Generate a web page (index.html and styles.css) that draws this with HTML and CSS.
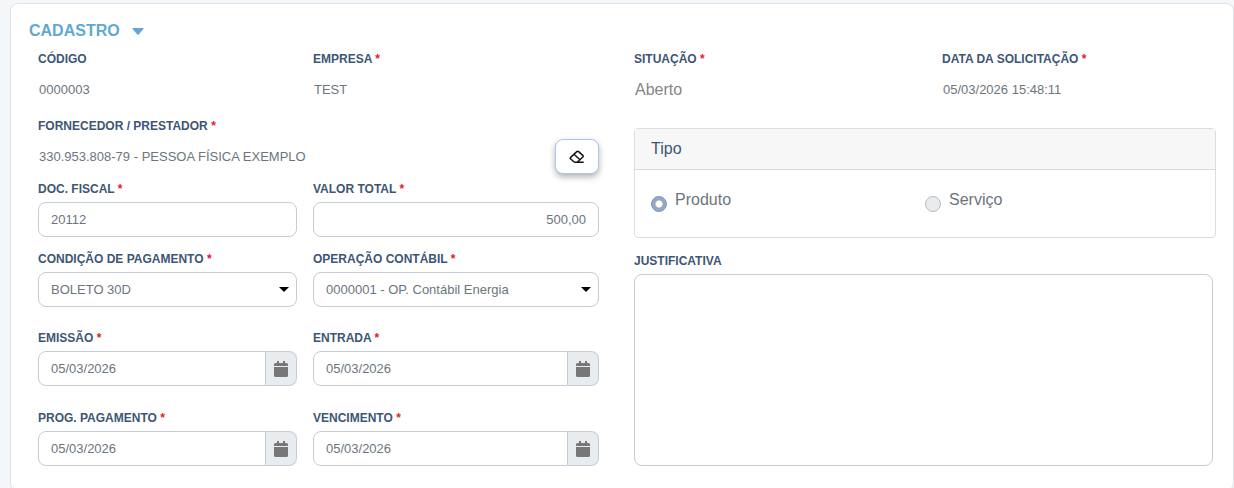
FILE: index.html
```html
<!DOCTYPE html>
<html lang="pt-BR">
<head>
	<meta charset="UTF-8">
	<title>Cadastro</title>
	<link rel="stylesheet" href="styles.css">
</head>
<body>
	<svg width="0" height="0" class="sprite">
		<symbol id="ico-cal" viewBox="0 0 14 16">
			<path d="M3 0h2v2h4V0h2v2h1.500a1.500 1.500 0 0 1 1.500 1.500V5H0V3.500A1.500 1.500 0 0 1 1.500 2H3zM0 6h14v8.500a1.500 1.500 0 0 1-1.500 1.500h-11A1.500 1.500 0 0 1 0 14.500z"/>
		</symbol>
	</svg>

	<form class="card">
		<h1 class="title">CADASTRO
			<svg width="12" height="7" viewBox="0 0 12 7"><path d="M1 0h10q1 0 .4 1L6.700 6.500q-.7.700-1.400 0L.6 1Q0 0 1 0z"/></svg>
		</h1>

		<div class="cols">
			<div class="left">
				<div class="row r1">
					<div class="field">
						<label for="codigo">CÓDIGO</label>
						<input id="codigo" class="plain" value="0000003" readonly>
					</div>
					<div class="field">
						<label for="empresa">EMPRESA <i>*</i></label>
						<input id="empresa" class="plain" value="TEST" readonly>
					</div>
				</div>
				<div class="field r2">
					<label for="fornecedor">FORNECEDOR / PRESTADOR <i>*</i></label>
					<div class="busca">
						<input id="fornecedor" class="plain" value="330.953.808-79 - PESSOA FÍSICA EXEMPLO" readonly>
						<button type="button" class="limpar" aria-label="Limpar">
							<svg width="16" height="14" viewBox="0 0 16 14"><path d="M5.500 12.300h9.200M5.500 12.300L1.700 9q-.8-.8 0-1.600L7.800 1.600q.9-.8 1.800 0l4.200 3.800q.8.800 0 1.600l-5.600 5.300M5 4.300l6 5.400"/></svg>
						</button>
					</div>
				</div>
				<div class="row r3">
					<div class="field">
						<label for="doc">DOC. FISCAL <i>*</i></label>
						<input id="doc" class="ctl" value="20112">
					</div>
					<div class="field">
						<label for="valor">VALOR TOTAL <i>*</i></label>
						<input id="valor" class="ctl num" value="500,00">
					</div>
				</div>
				<div class="row r4">
					<div class="field">
						<label for="cond">CONDIÇÃO DE PAGAMENTO <i>*</i></label>
						<div class="sel">
							<select id="cond" class="ctl"><option>BOLETO 30D</option></select>
							<svg width="10" height="5" viewBox="0 0 10 5"><path d="M0 0h10L5 5z"/></svg>
						</div>
					</div>
					<div class="field">
						<label for="oper">OPERAÇÃO CONTÁBIL <i>*</i></label>
						<div class="sel">
							<select id="oper" class="ctl"><option>0000001 - OP. Contábil Energia</option></select>
							<svg width="10" height="5" viewBox="0 0 10 5"><path d="M0 0h10L5 5z"/></svg>
						</div>
					</div>
				</div>
				<div class="row r5">
					<div class="field">
						<label for="emissao">EMISSÃO <i>*</i></label>
						<div class="data">
							<input id="emissao" class="ctl" value="05/03/2026">
							<button type="button" aria-label="Calendário"><svg width="14" height="16"><use href="#ico-cal"/></svg></button>
						</div>
					</div>
					<div class="field">
						<label for="entrada">ENTRADA <i>*</i></label>
						<div class="data">
							<input id="entrada" class="ctl" value="05/03/2026">
							<button type="button" aria-label="Calendário"><svg width="14" height="16"><use href="#ico-cal"/></svg></button>
						</div>
					</div>
				</div>
				<div class="row">
					<div class="field">
						<label for="prog">PROG. PAGAMENTO <i>*</i></label>
						<div class="data">
							<input id="prog" class="ctl" value="05/03/2026">
							<button type="button" aria-label="Calendário"><svg width="14" height="16"><use href="#ico-cal"/></svg></button>
						</div>
					</div>
					<div class="field">
						<label for="venc">VENCIMENTO <i>*</i></label>
						<div class="data">
							<input id="venc" class="ctl" value="05/03/2026">
							<button type="button" aria-label="Calendário"><svg width="14" height="16"><use href="#ico-cal"/></svg></button>
						</div>
					</div>
				</div>
			</div>

			<div class="right">
				<div class="topo">
					<div class="field">
						<label for="situacao">SITUAÇÃO <i>*</i></label>
						<input id="situacao" class="plain grande" value="Aberto" readonly>
					</div>
					<div class="field">
						<label for="datasol">DATA DA SOLICITAÇÃO <i>*</i></label>
						<input id="datasol" class="plain" value="05/03/2026 15:48:11" readonly>
					</div>
				</div>
				<div class="tipo" role="radiogroup" aria-labelledby="tipo-t">
					<div class="tipo-head" id="tipo-t">Tipo</div>
					<div class="tipo-body">
						<div class="opt">
							<input type="radio" name="tipo" id="produto" checked disabled>
							<label for="produto">Produto</label>
						</div>
						<div class="opt">
							<input type="radio" name="tipo" id="servico" disabled>
							<label for="servico">Serviço</label>
						</div>
					</div>
				</div>
				<div class="field just">
					<label for="just">JUSTIFICATIVA</label>
					<textarea id="just" class="ctl"></textarea>
				</div>
			</div>
		</div>
	</form>
</body>
</html>
```

FILE: styles.css
```css
*{
	box-sizing:border-box;
}

body{
	margin:0;
	padding:3px 0 0 10px;
	background:#f3f7fa;
	font-family:"Liberation Sans",Arial,sans-serif;
	font-size:13px;
	color:#6c757d;
	overflow:hidden;
}

input,select,textarea,button{
	font:inherit;
	color:inherit;
	margin:0;
}

.sprite{
	display:block;
}

.card{
	background:#fff;
	border:1px solid #dee2e6;
	border-radius:8px;
	padding:17px 17px 24px 27px;
}

.title{
	display:flex;
	align-items:center;
	gap:12px;
	margin:0 0 9px -9px;
	font-size:16px;
	line-height:20px;
	color:#61a8d1;
}

.title svg{
	fill:#61a8d1;
}

.cols{
	display:grid;
	grid-template-columns:561fr 582fr;
	gap:35px;
}

.left,.right{
	display:flex;
	flex-direction:column;
	min-width:0;
}

.row{
	display:grid;
	grid-template-columns:259fr 286fr;
	gap:16px;
}

.r1{
	margin-bottom:10px;
}

.r2{
	margin-bottom:6px;
}

.r3{
	margin-bottom:13px;
}

.r4{
	margin-bottom:22px;
}

.r5{
	margin-bottom:23px;
}

.field{
	display:flex;
	flex-direction:column;
	gap:4px;
	min-width:0;
}

.field label{
	font-size:12px;
	font-weight:bold;
	line-height:18px;
	color:#3d5675;
	white-space:nowrap;
}

.field label i{
	font-style:normal;
	color:#e8192c;
}

/* campos somente leitura */
.plain{
	width:100%;
	height:35px;
	padding:0 1px;
	border:0;
	background:none;
}

.grande{
	font-size:16px;
	color:#868686;
}

.ctl{
	width:100%;
	height:35px;
	padding:0 12px;
	border:1px solid #c5ccd5;
	border-radius:8px;
	background:#fff;
}

.num{
	text-align:right;
}

.busca{
	display:flex;
}

.limpar{
	flex:none;
	width:44px;
	height:35px;
	padding:0;
	display:flex;
	align-items:center;
	justify-content:center;
	border:1px solid #a9c8f0;
	border-radius:8px;
	background:#fff;
	box-shadow:0 3px 6px rgba(0,0,0,.3);
}

.limpar svg{
	fill:none;
	stroke:#111;
	stroke-width:1.5;
}

.sel{
	display:grid;
	align-items:center;
}

.sel select,.sel svg{
	grid-area:1/1;
}

.sel select{
	appearance:none;
}

.sel svg{
	justify-self:end;
	margin-right:8px;
	pointer-events:none;
}

.data{
	display:flex;
}

.data .ctl{
	flex:1;
	min-width:0;
	border-radius:8px 0 0 8px;
}

.data button{
	width:31px;
	padding:0;
	display:flex;
	align-items:center;
	justify-content:center;
	border:1px solid #c5ccd5;
	border-left:0;
	border-radius:0 8px 8px 0;
	background:#e9ecef;
}

.data button svg{
	fill:#777;
}

.topo{
	display:grid;
	grid-template-columns:308fr 274fr;
	margin-bottom:21px;
}

.tipo{
	border:1px solid #dcdddf;
	border-radius:4px;
	margin-bottom:14px;
	font-size:16px;
}

.tipo-head{
	padding:8px 16px;
	line-height:24px;
	color:#3d5675;
	background:#f7f7f7;
	border-bottom:1px solid #d8d9da;
}

.tipo-body{
	display:grid;
	grid-template-columns:1fr 1fr;
	padding:18px 16px 25px;
}

.opt{
	display:flex;
	gap:8px;
	line-height:24px;
}

.opt input{
	appearance:none;
	width:16px;
	height:16px;
	margin-top:8px;
	border:1px solid #b4bac0;
	border-radius:50%;
	background:#e9ecef;
}

.opt input:checked{
	border-color:#6d95e0;
	background:radial-gradient(circle,#fff 3px,#9aa8b9 4px);
}

.just{
	margin-right:3px;
	flex:1;
}

textarea.ctl{
	display:block;
	flex:1;
	padding:8px 12px;
	resize:none;
}
```
